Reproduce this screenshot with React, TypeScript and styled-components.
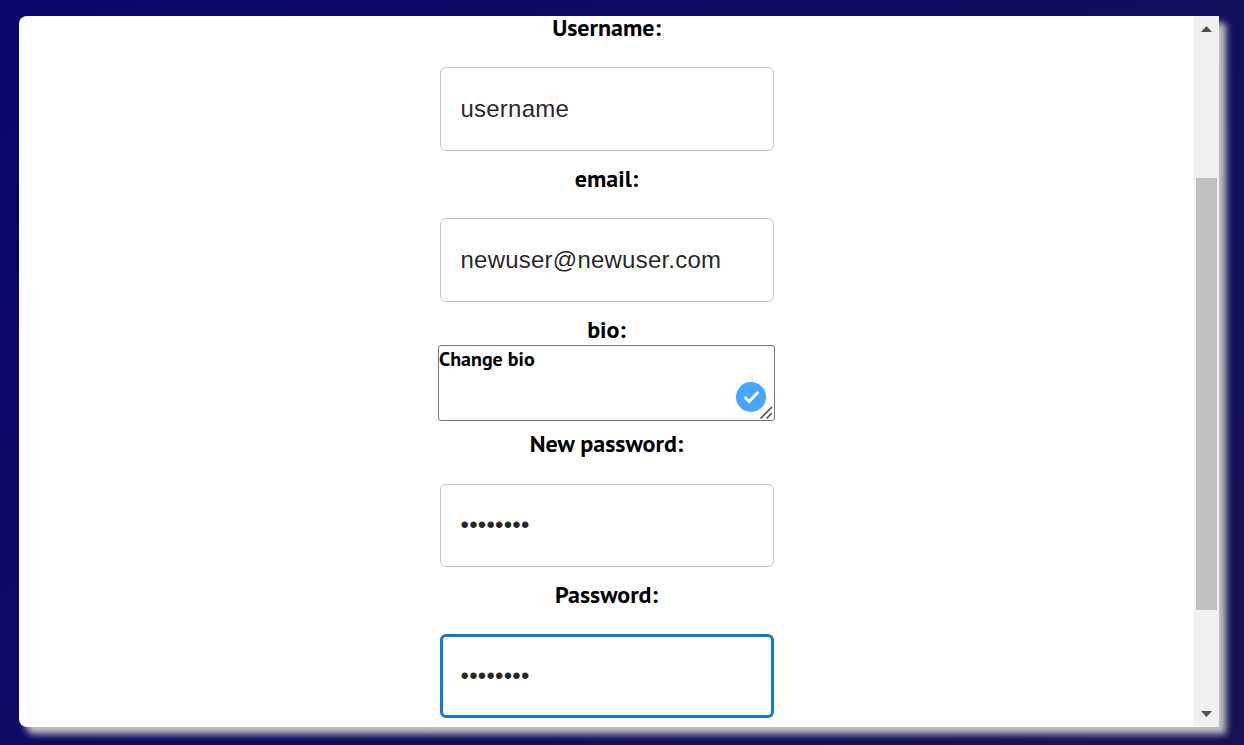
import React from "react";
import styled, { createGlobalStyle } from "styled-components";

const GlobalStyle = createGlobalStyle`
  * { box-sizing: border-box; }
  html, body { margin: 0; height: 100%; overflow: hidden; }
`;

const Page = styled.main`
  height: 745px;
  padding: 16px 25px 18px 19px;
  background: linear-gradient(135deg, #0a0669 0%, #110b60 50%, #171256 100%);
`;

const Panel = styled.section`
  display: flex;
  height: 711px;
  border-radius: 8px 0 0 8px;
  background: #fff;
  box-shadow: 7px 7px 7.5px #c4c4c4;
`;

const Form = styled.form`
  flex: 1;
  display: flex;
  flex-direction: column;
  align-items: center;
  min-width: 0;
`;

const Field = styled.div<{ $after?: number }>`
  display: flex;
  flex-direction: column;
  align-items: center;
  margin-bottom: ${(p) => p.$after ?? 16}px;
`;

const Label = styled.label<{ $gap?: number }>`
  height: 24px;
  margin-bottom: ${(p) => p.$gap ?? 27}px;
  font: 700 24px/24px "PT Sans", "Noto Sans", sans-serif;
  white-space: nowrap;
  color: #000;
`;

const InputBox = styled.div<{ $focused?: boolean; $height?: number }>`
  display: flex;
  align-items: center;
  width: 334px;
  height: ${(p) => p.$height ?? 84}px;
  padding-left: ${(p) => (p.$focused ? 18 : 20)}px;
  padding-bottom: ${(p) => (p.$height ? 1 : 0)}px;
  border: ${(p) => (p.$focused ? "3px solid #1976d2" : "1px solid #c4c4c4")};
  border-radius: 6px;
  font: 24px/34px "Liberation Sans", Arial, sans-serif;
  letter-spacing: 0.225px;
  color: rgba(0, 0, 0, 0.87);
`;

const BioBox = styled.div`
  display: flex;
  flex-direction: column;
  justify-content: space-between;
  width: 337px;
  height: 76px;
  border: 1px solid #767676;
  border-radius: 3px;
`;

const BioText = styled.span`
  height: 26px;
  font: 700 20px/26px "PT Sans", "Noto Sans", sans-serif;
  color: #000;
`;

const BioActions = styled.svg`
  display: block;
  align-self: flex-end;
  width: 40px;
  height: 40px;
`;

const Scrollbar = styled.div`
  display: flex;
  flex-direction: column;
  align-items: center;
  width: 25px;
  background: #f0f0f0;
`;

const Arrow = styled.svg`
  display: block;
  flex: none;
  width: 25px;
  height: 25px;
  fill: #505050;
`;

const Track = styled.div`
  flex: 1;
  padding-top: 137px;
`;

const Thumb = styled.div`
  width: 21px;
  height: 432px;
  background: #c1c1c1;
`;

export default function App() {
  return (
    <>
      <GlobalStyle />
      <Page>
        <Panel>
          <Form>
            <Field>
              <Label>Username:</Label>
              <InputBox>username</InputBox>
            </Field>
            <Field>
              <Label>email:</Label>
              <InputBox>newuser@newuser.com</InputBox>
            </Field>
            <Field $after={11}>
              <Label $gap={3}>bio:</Label>
              <BioBox>
                <BioText>Change bio</BioText>
                <BioActions viewBox="0 0 40 40">
                  <circle cx="17" cy="17" r="15" fill="#45a5ff" />
                  <path d="M10.7 17.2 15.2 21.5 24.3 12" fill="none" stroke="#fff" strokeWidth="3" />
                  <path d="M26.5 38.5 38 27M32.5 38.5 38 33" fill="none" stroke="#555" strokeWidth="1.7" />
                </BioActions>
              </BioBox>
            </Field>
            <Field>
              <Label $gap={28}>New password:</Label>
              <InputBox $height={83}>••••••••</InputBox>
            </Field>
            <Field>
              <Label>Password:</Label>
              <InputBox $focused>••••••••</InputBox>
            </Field>
          </Form>
          <Scrollbar>
            <Arrow viewBox="0 0 25 25"><path d="M7 16 12.5 10 18 16Z" /></Arrow>
            <Track><Thumb /></Track>
            <Arrow viewBox="0 0 25 25"><path d="M7 9 12.5 15 18 9Z" /></Arrow>
          </Scrollbar>
        </Panel>
      </Page>
    </>
  );
}
